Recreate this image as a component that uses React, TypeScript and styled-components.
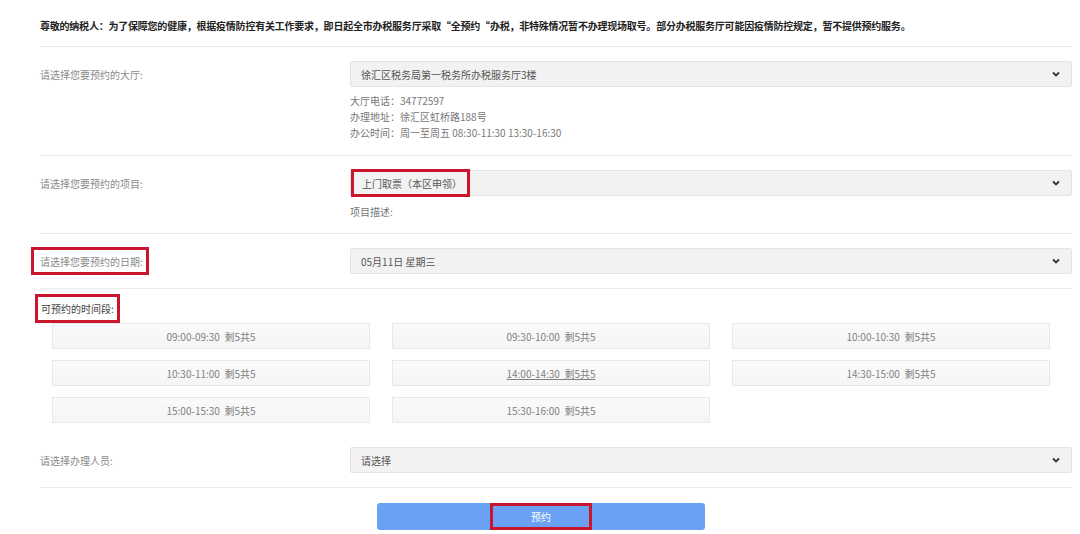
import React from 'react';
import styled, {createGlobalStyle} from 'styled-components';

const GlobalStyle = createGlobalStyle`
  body {
    margin: 0;
    background: #ffffff;
    font-family: "Noto Sans CJK SC", "Liberation Sans", sans-serif;
  }
`

const Page = styled.div`
  width: 1080px;
  height: 534px;
  overflow: hidden;
  box-sizing: border-box;
  padding: 0 8px 0 40px;
  display: flex;
  flex-direction: column;
`

const Notice = styled.div`
  font-size: 10px;
  font-weight: bold;
  letter-spacing: -0.22px;
  color: #222;
  line-height: 16px;
  padding-top: 18px;
  padding-bottom: 12px;
  border-bottom: 1px solid #ebebeb;
  white-space: nowrap;
`

const Field = styled.div<{ top?: number; bottom?: number; line?: boolean }>`
  display: grid;
  grid-template-columns: 310px 1fr;
  align-items: start;
  padding-top: ${p => p.top ?? 14}px;
  padding-bottom: ${p => p.bottom ?? 14}px;
  border-bottom: ${p => p.line === false ? 'none' : '1px solid #ebebeb'};
`

const Label = styled.div`
  font-size: 10px;
  color: #8a8a8a;
  height: 26px;
  display: flex;
  align-items: center;
  white-space: nowrap;
`

const Marked = styled.span`
  border: 3px solid #c9162d;
  display: inline-flex;
  align-items: center;
  box-sizing: border-box;
`

const LabelMark = styled(Marked)`
  height: 28px;
  padding: 0 3px 0 6px;
  margin-left: -9px;
`

const Select = styled.div`
  height: 26px;
  box-sizing: border-box;
  background: #f2f2f2;
  border: 1px solid #e4e4e4;
  border-radius: 2px;
  display: flex;
  align-items: center;
  justify-content: space-between;
  padding: 0 10px 0 10px;
  font-size: 10px;
  color: #555;
`

const ValueMark = styled(Marked)`
  height: 28px;
  margin-left: -10px;
  padding: 0 5px 0 8px;
`

const Chevron = () => (
  <svg width="10" height="8" viewBox="0 0 10 8">
    <path d="M2 2.5 L5 5.5 L8 2.5" fill="none" stroke="#333" strokeWidth="1.8"/>
  </svg>
)

const Info = styled.div<{ gap?: number }>`
  margin-top: ${p => p.gap ?? 6}px;
  font-size: 10px;
  line-height: 16px;
  color: #777;
`

const TimeTitle = styled.div`
  padding-top: 4px;
  height: 30px;
  display: flex;
  align-items: center;
`

const TimeMark = styled(Marked)`
  height: 29px;
  padding: 0 3px 0 3px;
  margin-left: -5px;
  font-size: 10px;
  color: #444;
`

const SlotGrid = styled.div`
  display: grid;
  grid-template-columns: repeat(3, 318px);
  column-gap: 22px;
  row-gap: 11px;
  margin-left: 12px;
`

const Slot = styled.div<{ active?: boolean }>`
  height: 26px;
  box-sizing: border-box;
  border: 1px solid #e8e8e8;
  background: linear-gradient(#fafafa, #f5f5f5);
  display: flex;
  align-items: center;
  justify-content: center;
  font-size: 10px;
  color: #808080;
  text-decoration: ${p => p.active ? 'underline' : 'none'};
`

const Footer = styled.div`
  display: flex;
  justify-content: center;
  padding-top: 15px;
  margin-left: -30px;
`

const Button = styled.div`
  width: 328px;
  height: 27px;
  background: #6aa1f5;
  border-radius: 3px;
  display: flex;
  justify-content: center;
  color: #fff;
  font-size: 10px;
`

const ButtonMark = styled(Marked)`
  width: 102px;
  height: 27px;
  justify-content: center;
`

const slots = [
  '09:00-09:30', '09:30-10:00', '10:00-10:30',
  '10:30-11:00', '14:00-14:30', '14:30-15:00',
  '15:00-15:30', '15:30-16:00',
];

const App = () => {
  return (
    <Page>
      <GlobalStyle/>
      <Notice>
        尊敬的纳税人：为了保障您的健康，根据疫情防控有关工作要求，即日起全市办税服务厅采取“全预约“办税，非特殊情况暂不办理现场取号。部分办税服务厅可能因疫情防控规定，暂不提供预约服务。
      </Notice>

      <Field>
        <Label>请选择您要预约的大厅:</Label>
        <div>
          <Select>
            <span>徐汇区税务局第一税务所办税服务厅3楼</span>
            <Chevron/>
          </Select>
          <Info>
            <div>大厅电话：34772597</div>
            <div>办理地址：徐汇区虹桥路188号</div>
            <div>办公时间：周一至周五 08:30-11:30 13:30-16:30</div>
          </Info>
        </div>
      </Field>

      <Field bottom={13}>
        <Label>请选择您要预约的项目:</Label>
        <div>
          <Select>
            <ValueMark>上门取票（本区申领）</ValueMark>
            <Chevron/>
          </Select>
          <Info gap={8}>项目描述:</Info>
        </div>
      </Field>

      <Field>
        <Label><LabelMark>请选择您要预约的日期:</LabelMark></Label>
        <Select>
          <span>05月11日 星期三</span>
          <Chevron/>
        </Select>
      </Field>

      <TimeTitle>
        <TimeMark>可预约的时间段:</TimeMark>
      </TimeTitle>
      <SlotGrid>
        {slots.map(s => (
          <Slot key={s} active={s === '14:00-14:30'}>{s}&nbsp;&nbsp;剩5共5</Slot>
        ))}
      </SlotGrid>

      <Field top={24}>
        <Label>请选择办理人员:</Label>
        <Select>
          <span>请选择</span>
          <Chevron/>
        </Select>
      </Field>

      <Footer>
        <Button>
          <ButtonMark>预约</ButtonMark>
        </Button>
      </Footer>
    </Page>
  );
}

export default App;
